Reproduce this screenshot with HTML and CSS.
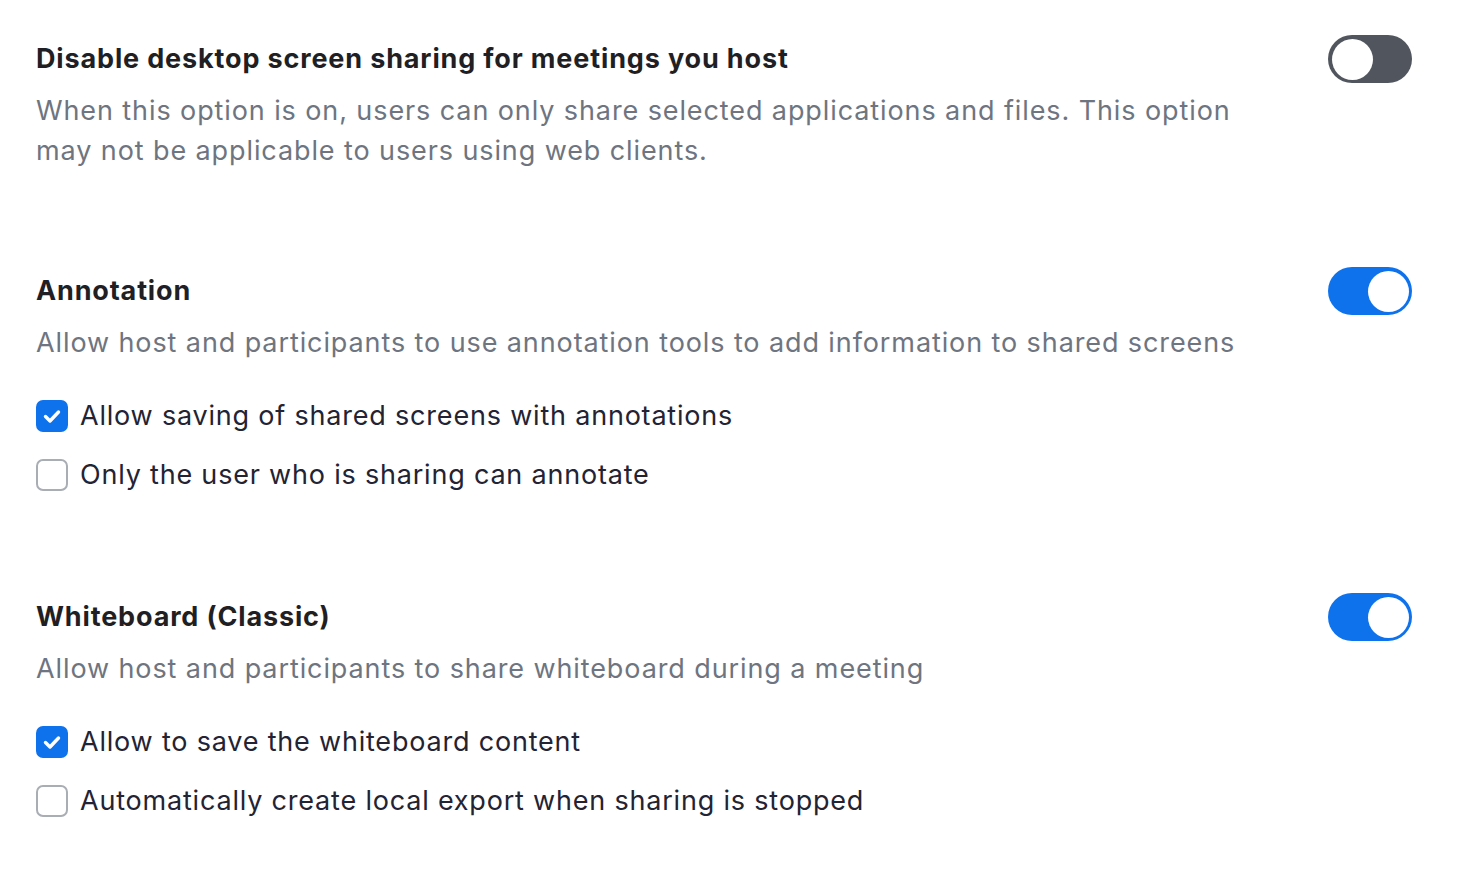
FILE: index.html
```html
<!DOCTYPE html>
<html lang="en">
<head>
<meta charset="utf-8">
<title>Settings</title>
<link rel="stylesheet" href="styles.css">
</head>
<body>
<main class="settings">
  <section class="setting">
    <div class="setting-head">
      <h2 class="setting-title">Disable desktop screen sharing for meetings you host</h2>
      <span class="toggle"><span class="knob"></span></span>
    </div>
    <p class="setting-desc">When this option is on, users can only share selected applications and files. This option may not be applicable to users using web clients.</p>
  </section>

  <section class="setting">
    <div class="setting-head">
      <h2 class="setting-title">Annotation</h2>
      <span class="toggle on"><span class="knob"></span></span>
    </div>
    <p class="setting-desc">Allow host and participants to use annotation tools to add information to shared screens</p>
    <div class="options">
      <label class="option"><span class="box checked"><svg viewBox="0 0 32 32" width="32" height="32"><path d="M9.5 16.5l4.5 4.5 8.5-9" fill="none" stroke="#fff" stroke-width="3.4" stroke-linecap="round" stroke-linejoin="round"/></svg></span>Allow saving of shared screens with annotations</label>
      <label class="option"><span class="box"></span>Only the user who is sharing can annotate</label>
    </div>
  </section>

  <section class="setting">
    <div class="setting-head">
      <h2 class="setting-title">Whiteboard (Classic)</h2>
      <span class="toggle on"><span class="knob"></span></span>
    </div>
    <p class="setting-desc">Allow host and participants to share whiteboard during a meeting</p>
    <div class="options">
      <label class="option"><span class="box checked"><svg viewBox="0 0 32 32" width="32" height="32"><path d="M9.5 16.5l4.5 4.5 8.5-9" fill="none" stroke="#fff" stroke-width="3.4" stroke-linecap="round" stroke-linejoin="round"/></svg></span>Allow to save the whiteboard content</label>
      <label class="option"><span class="box"></span>Automatically create local export when sharing is stopped</label>
    </div>
  </section>
</main>
</body>
</html>
```

FILE: styles.css
```css
* { box-sizing: border-box; }
html, body { margin: 0; padding: 0; background: #fff; }
body {
  font-family: Inter, "Noto Sans", "Liberation Sans", sans-serif;
  color: #232333;
}
.settings {
  padding: 43px 66px 0 36px;
  display: flex;
  flex-direction: column;
  gap: 104px;
}
.setting { display: flex; flex-direction: column; }
.setting-head {
  height: 32px;
  display: flex;
  align-items: center;
  justify-content: space-between;
}
.setting-title {
  margin: 0;
  font-size: 27px;
  font-weight: 700;
  line-height: 32px;
  letter-spacing: 0.85px;
  color: #1f1f24;
}
.setting-desc {
  margin: 16px 0 0;
  font-size: 27px;
  line-height: 40px;
  letter-spacing: 0.9px;
  color: #6e7580;
  max-width: 1210px;
}
.toggle {
  flex: none;
  width: 84px;
  height: 48px;
  border-radius: 24px;
  background: #51565e;
  display: flex;
  align-items: center;
  padding: 0 3.5px;
}
.toggle .knob {
  width: 41px;
  height: 41px;
  border-radius: 50%;
  background: #fff;
}
.toggle.on { background: #0e72ed; justify-content: flex-end; }
.options {
  margin-top: 33px;
  margin-bottom: 2px;
  display: flex;
  flex-direction: column;
  gap: 19px;
}
.option {
  display: flex;
  align-items: center;
  gap: 12px;
  height: 40px;
  font-size: 27px;
  line-height: 40px;
  letter-spacing: 0.8px;
  color: #232333;
}
.box {
  flex: none;
  width: 32px;
  height: 32px;
  border-radius: 7px;
  border: 2px solid #a9adb4;
  background: #fff;
  display: flex;
}
.box.checked {
  border: none;
  background: #0e72ed;
}
.box svg { display: block; }
```
